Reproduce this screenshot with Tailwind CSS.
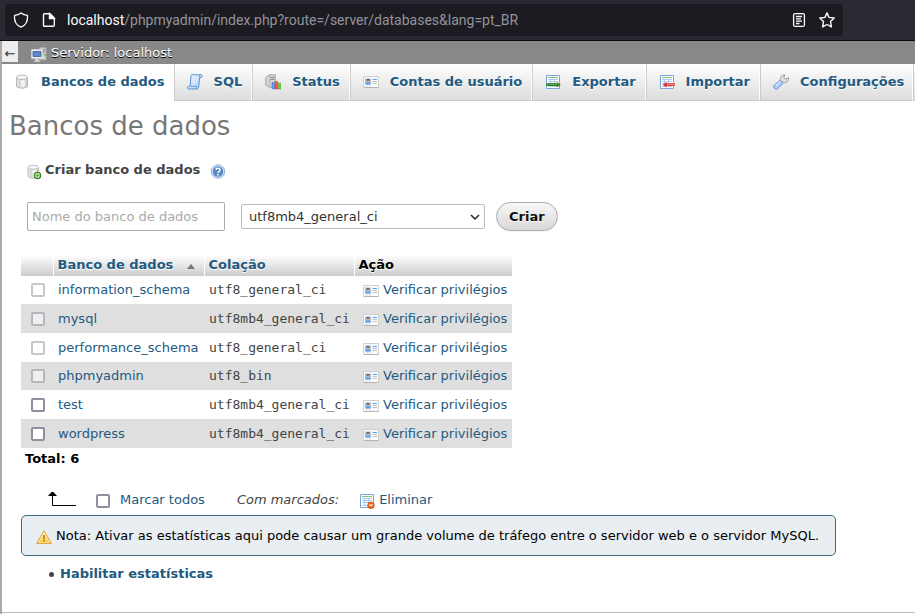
<!DOCTYPE html>
<html lang="pt-BR">
<head>
<meta charset="utf-8">
<meta name="viewport" content="width=device-width, initial-scale=1">
<title>localhost | phpMyAdmin</title>
<script src="https://cdn.jsdelivr.net/npm/@tailwindcss/browser@4"></script>
</head>
<body class="flex min-h-screen flex-col bg-white font-['DejaVu_Sans',sans-serif] text-[13px] leading-4 text-[#444]">

<svg class="absolute size-0" aria-hidden="true">
  <defs>
    <linearGradient id="silver" x1="0" x2="1" y1="0" y2="0"><stop offset="0" stop-color="#f6f6f6"/><stop offset=".25" stop-color="#d2d2d2"/><stop offset=".6" stop-color="#fafafa"/><stop offset="1" stop-color="#c2c2c2"/></linearGradient>
    <linearGradient id="paper" x1="0" x2="1" y1="0" y2="1"><stop offset="0" stop-color="#f4faff"/><stop offset="1" stop-color="#a9cdf3"/></linearGradient>
    <linearGradient id="amber" x1="0" x2="0" y1="0" y2="1"><stop offset="0" stop-color="#fff6c8"/><stop offset="1" stop-color="#f7c53c"/></linearGradient>
    <symbol id="i-db" viewBox="0 0 16 16">
      <path d="M2.500 3.500v8.500c0 1.200 2.400 2.100 5.500 2.100s5.500-.9 5.500-2.100v-8.500z" fill="url(#silver)" stroke="#b4b4b4"/>
      <ellipse cx="8" cy="3.300" rx="5.500" ry="2.200" fill="#f7f7f7" stroke="#bababa"/>
    </symbol>
    <symbol id="i-dbnew" viewBox="0 0 16 16">
      <path d="M1 3.500v8.500c0 1.300 2.300 2.200 5.300 2.200s5.300-.9 5.300-2.200v-8.500z" fill="url(#silver)" stroke="#b9b9b9"/>
      <ellipse cx="6.300" cy="3.300" rx="5.300" ry="2" fill="#f8f8f8" stroke="#bfbfbf"/>
      <circle cx="10.500" cy="11.500" r="3.100" fill="#fff" stroke="#3d8516" stroke-width="1.300"/>
      <path d="M10.500 9.500v4M8.500 11.500h4" stroke="#63ad35" stroke-width="1.300"/>
    </symbol>
    <symbol id="i-server" viewBox="0 0 16 16">
      <path d="M8.500 .8h6.500v12h-6.500z" fill="#d4d4d4" stroke="#aaa"/><path d="M11 3h3M11 5h3" stroke="#777"/><path d="M13 8h1.500" stroke="#5cb33b" stroke-width="1.500"/>
      <path d="M.5 2.500h11v9h-11z" fill="#eee" stroke="#d0d0d0"/><path d="M2 4.500h8v5h-8z" fill="#5c88cb" stroke="#345f9f" stroke-width=".8"/>
      <path d="M4.500 12h3v1.500h1.500v1.300h-6v-1.300h1.500z" fill="#ddd"/>
    </symbol>
    <symbol id="i-sql" viewBox="0 0 16 16">
      <path d="M4.500.8h9.500c1.400.2 1.500 2 .5 2.800h-1.800l-1 9c-.2 1.600-.8 2.400-2 2.400h-8c-1.600-.3-1.500-2.500 0-2.700h1.500l.8-9.500c0-1.200-.2-1.700.5-2z" fill="url(#paper)" stroke="#5b92cf"/>
      <path d="M4 12.300h5.500c.6.800.2 2.200-.8 2.600M12.700 3.600c-.6-.8-.3-2.300.7-2.800" fill="none" stroke="#5b92cf" stroke-width=".9"/>
    </symbol>
    <symbol id="i-status" viewBox="0 0 16 16">
      <path d="M.8 3.200 4.500.8h5.800v12.400H4.500L.8 11z" fill="#d6d6d6" stroke="#a5a5a5"/><path d="M4.700 1v12" stroke="#b5b5b5"/><path d="M5.500 3.500h4M5.500 5.500h4" stroke="#888"/>
      <path d="M7 8.500h2.500v6.500H7z" fill="#5aa0ff" stroke="#2f74df" stroke-width=".5"/><path d="M10 7.500h2.700v7.500H10z" fill="#ff5542" stroke="#e12f20" stroke-width=".5"/><path d="M13.200 9h2.500v6h-2.500z" fill="#66cf42" stroke="#3fa51d" stroke-width=".5"/>
    </symbol>
    <symbol id="i-card" viewBox="0 0 16 16">
      <path d="M.5 2.500h15v11H.5z" fill="#fafafa" stroke="#cfcfcf"/><path d="M1 13.500h14.500" stroke="#b4b4b4"/>
      <path d="M2 4.500h6v6H2z" fill="#8fc1f6"/><path d="M2.700 10.500c0-2 1-2.500 2.300-2.500s2.300.5 2.300 2.500z" fill="#5c9dec"/><circle cx="5" cy="7" r="1.500" fill="#ecae7b"/><path d="M3.400 6.500c.2-2 3-2 3.200 0z" fill="#6c4527"/>
      <path d="M9.500 5.500h4.500" stroke="#62a3ea"/><path d="M9.500 7.500h4.500M9.500 9.500h4.500" stroke="#c2c2c2"/><path d="M3 12h1.500M6 12h1.500" stroke="#ccc"/>
    </symbol>
    <symbol id="i-table" viewBox="0 0 16 16">
      <path d="M1.500 1.500h13v13h-13z" fill="#fff" stroke="#7ba4dc"/><path d="M3 3.500h10" stroke="#83c07b"/>
      <path d="M3 5.500h10M3 7.500h10M3 9.500h10M3 12.500h10M5.500 5v8M9.500 5v8" stroke="#a5c5ee" stroke-width=".9"/>
    </symbol>
    <symbol id="i-export" viewBox="0 0 16 16"><use href="#i-table"/><path d="M1.300 9.300h10.500V7.900l4 2.800-4 2.800v-1.400H1.300z" fill="#2e7f1e"/><path d="M2.200 10.700h11" stroke="#75b95e" stroke-width=".7"/></symbol>
    <symbol id="i-import" viewBox="0 0 16 16"><use href="#i-table"/><path d="M15.700 9.300H7.500V7.900l-4 2.800 4 2.800v-1.400h8.200z" fill="#ed3333"/><path d="M8 10.700h7" stroke="#ffaaa4" stroke-width=".8"/></symbol>
    <symbol id="i-drop" viewBox="0 0 16 16"><use href="#i-table"/><circle cx="12" cy="12.300" r="3.300" fill="#ed6a1d" stroke="#c54a0a" stroke-width=".7"/><path d="M10.200 12.200h3.600" stroke="#fff" stroke-width="1.300"/></symbol>
    <symbol id="i-wrench" viewBox="0 0 16 16">
      <path d="M7.500 6.800c-.8-3 1-5.800 4.300-6l-1 2.700 1.600 1.700 3.200-1.400c.7 3-2 5.200-5.100 4.500z" fill="#e2e2e2" stroke="#8d8d8d" stroke-width=".9"/>
      <path d="M6.800 6.300l3.200 3.200-5.300 5.200c-2.200 1.500-5.200-1.200-3.500-3.500z" fill="#a9c7f7" stroke="#6790dc" stroke-width=".9"/><path d="M2.700 12l4.800-4.500" stroke="#dbe8ff" stroke-width="1.300"/>
    </symbol>
    <symbol id="i-help" viewBox="0 0 16 16">
      <circle cx="8" cy="7.500" r="6.700" fill="#dce8f7" stroke="#83a6d2" stroke-width=".9"/><circle cx="8" cy="7.500" r="5.300" fill="#5a89c6"/>
      <path d="M6 6.100c0-2.600 4-2.500 4-.2 0 1.500-2 1.400-2 3" fill="none" stroke="#fff" stroke-width="1.400"/><circle cx="8" cy="10.700" r=".9" fill="#fff"/>
    </symbol>
    <symbol id="i-warn" viewBox="0 0 16 16">
      <path d="M8 .8 15.300 13.400H.7z" fill="url(#amber)" stroke="#dfa03a" stroke-linejoin="round"/><path d="M8 2.900 13.500 12.400h-11z" fill="none" stroke="#fff2b5" stroke-width=".7"/>
      <path d="M8 5v4.500" stroke="#c48113" stroke-width="1.800"/><path d="M8 10.300v1.500" stroke="#c48113" stroke-width="1.800"/>
    </symbol>
  </defs>
</svg>

<div class="flex h-[41px] items-center border-b border-[#0c0c0d] bg-[#2b2a33] pr-[72px] pl-[5px]">
  <div class="flex h-8 flex-1 items-center rounded bg-[#1c1b22] pl-2 text-[#fbfbfe]">
    <svg class="size-4 shrink-0" viewBox="0 0 16 16" fill="none" stroke="currentColor" stroke-width="1.300" aria-hidden="true"><path d="M8 .9c2 1.500 4 2.200 6.500 2.500.4 5-1.400 9.800-6.500 11.700C2.900 13.200 1.100 8.400 1.500 3.400 4 3.100 6 2.400 8 .9z" stroke-linejoin="round"/></svg>
    <svg class="ml-3 size-4 shrink-0" viewBox="0 0 16 16" fill="none" stroke="currentColor" stroke-width="1.400" aria-hidden="true"><path d="M3.500 1.700h5.500l4.300 4.300v7.300a1 1 0 0 1-1 1H3.500a1 1 0 0 1-1-1V2.700a1 1 0 0 1 1-1z"/><path d="M8.500 1.700v4.800h4.800z" fill="currentColor"/></svg>
    <div role="textbox" aria-label="Endereço" class="ml-[10px] flex-1 font-['Roboto',sans-serif] text-[14px] leading-5 whitespace-nowrap text-[#93939b]"><span class="text-[#fbfbfe]">localhost</span>/phpmyadmin/index.php?route=/server/databases&amp;lang=pt_BR</div>
    <button type="button" aria-label="Modo de leitura" class="mr-3"><svg class="size-4" viewBox="0 0 16 16" fill="none" stroke="currentColor" stroke-width="1.300"><rect x="2.600" y="1.600" width="10.800" height="12.800" rx="1.500"/><path d="M5 4.500h6M5 6.800h5M5 9.200h6M5 11.500h3.500"/></svg></button>
    <button type="button" aria-label="Adicionar aos favoritos" class="mr-2"><svg class="size-4" viewBox="0 0 16 16" fill="none" stroke="currentColor" stroke-width="1.400" stroke-linejoin="round"><path d="M8 .9l2 4.500 5.200.6-3.700 3.600.9 5.300L8 12.500l-4.400 2.400.9-5.300L.8 6 6 5.400z"/></svg></button>
  </div>
</div>

<div class="flex flex-1 flex-col border-l-2 border-[#aaa]">
  <header class="flex h-[23px] items-start bg-[#888]">
    <button type="button" aria-label="Ocultar painel" class="h-[21px] w-4 bg-[#eee] pt-1 text-[13px] text-[#333]">←</button>
    <a href="#" class="ml-3 flex h-[23px] items-center gap-1 text-white [text-shadow:0_1px_0_#000]"><svg class="mt-1 ml-px size-4" aria-hidden="true"><use href="#i-server"/></svg>Servidor: localhost</a>
  </header>

  <nav class="flex font-bold text-[#235a81] [text-shadow:0_1px_0_#fff]">
    <a href="#" class="flex h-9 items-center gap-[11px] border-r border-white bg-white pr-2 pl-3 whitespace-nowrap"><svg class="size-4" aria-hidden="true"><use href="#i-db"/></svg>Bancos de dados</a>
    <a href="#" class="flex h-[37px] items-center gap-[11px] border border-t-0 border-[#ccc] border-r-white bg-linear-to-b from-white to-[#dcdcdc] pr-[9px] pl-3 whitespace-nowrap"><svg class="size-4" aria-hidden="true"><use href="#i-sql"/></svg>SQL</a>
    <a href="#" class="flex h-[37px] items-center gap-[11px] border border-t-0 border-[#ccc] border-r-white bg-linear-to-b from-white to-[#dcdcdc] pr-[9px] pl-3 whitespace-nowrap"><svg class="size-4" aria-hidden="true"><use href="#i-status"/></svg>Status</a>
    <a href="#" class="flex h-[37px] items-center gap-[11px] border border-t-0 border-[#ccc] border-r-white bg-linear-to-b from-white to-[#dcdcdc] pr-[9px] pl-3 whitespace-nowrap"><svg class="size-4" aria-hidden="true"><use href="#i-card"/></svg>Contas de usuário</a>
    <a href="#" class="flex h-[37px] items-center gap-[11px] border border-t-0 border-[#ccc] border-r-white bg-linear-to-b from-white to-[#dcdcdc] pr-[9px] pl-3 whitespace-nowrap"><svg class="size-4" aria-hidden="true"><use href="#i-export"/></svg>Exportar</a>
    <a href="#" class="flex h-[37px] items-center gap-[11px] border border-t-0 border-[#ccc] border-r-white bg-linear-to-b from-white to-[#dcdcdc] pr-[9px] pl-3 whitespace-nowrap"><svg class="size-4" aria-hidden="true"><use href="#i-import"/></svg>Importar</a>
    <a href="#" class="flex h-[37px] items-center gap-[11px] border border-t-0 border-[#ccc] border-r-white bg-linear-to-b from-white to-[#dcdcdc] pr-2 pl-3 whitespace-nowrap"><svg class="size-4" aria-hidden="true"><use href="#i-wrench"/></svg>Configurações</a>
    <span class="flex-1 border-b border-l border-[#ccc] bg-linear-to-b from-white to-[#dcdcdc]"></span>
  </nav>

  <main class="flex-1 px-[19px]">
    <h1 class="-ml-3 pt-[9px] text-[26px] leading-8 text-[#777]">Bancos de dados</h1>

    <form class="pt-[18px] pl-[6px]" onsubmit="return false">
      <div class="flex h-5 items-center font-bold">
        <svg class="mt-1 size-4" aria-hidden="true"><use href="#i-dbnew"/></svg><label for="db" class="ml-[2px]">Criar banco de dados</label>
        <a href="#" aria-label="Documentação" class="mt-1 ml-[10px]"><svg class="size-4"><use href="#i-help"/></svg></a>
      </div>
      <div class="flex items-center pt-[22px]">
        <input id="db" type="text" placeholder="Nome do banco de dados" class="h-[29px] w-[198px] rounded-xs border border-[#aaa] bg-white px-1 text-[#444] placeholder:text-[#aaa]">
        <div class="relative ml-4">
          <select aria-label="Colação" class="h-[25px] w-[244px] appearance-none rounded-xs border border-[#bbb] bg-white pr-6 pl-[7px] text-[#333]"><option>utf8mb4_general_ci</option><option>utf8_general_ci</option></select>
          <svg class="pointer-events-none absolute top-2 right-[5px] size-[10px]" viewBox="0 0 10 10" fill="none" stroke="#222" stroke-width="1.500" aria-hidden="true"><path d="M1 3l4 4 4-4"/></svg>
        </div>
        <button type="submit" class="ml-[11px] h-[29px] rounded-full border border-[#aaa] bg-linear-to-b from-[#f8f8f8] to-[#d8d8d8] px-3 font-bold text-[#111] shadow-xs [text-shadow:0_1px_0_#fff]">Criar</button>
      </div>
    </form>

    <form class="pt-6" onsubmit="return false">
      <table class="w-[491px] table-fixed border-collapse">
        <colgroup><col class="w-8"><col class="w-[151px]"><col class="w-[150px]"><col></colgroup>
        <thead>
          <tr class="h-[21px] text-left text-[#235a81] [text-shadow:0_1px_0_#fff] [&>th]:bg-linear-to-b [&>th]:from-white [&>th]:to-[#ccc] [&>th]:p-0 [&>th]:pb-[2px]">
            <th></th>
            <th class="border-l border-white"><a href="#" class="flex items-center pl-1">Banco de dados <svg class="mt-1 ml-[14px] h-[5px] w-2" viewBox="0 0 8 5" aria-hidden="true"><path d="M4 0l4 5H0z" fill="#777"/></svg></a></th>
            <th class="border-l border-white"><a href="#" class="pl-1">Colação</a></th>
            <th class="border-l border-white text-black"><span class="pl-1">Ação</span></th>
          </tr>
        </thead>
        <tbody id="rows"></tbody>
      </table>
      <div class="pt-[3px] pl-1 font-bold text-black">Total: 6</div>

      <div class="mt-5 flex h-[26px] items-center pl-[27px]">
        <svg class="h-4 w-7" viewBox="0 0 28 16" aria-hidden="true"><path d="M4.500 2v11.500H28" fill="none" stroke="#000"/><path d="M4.500 -1L9 4H0z" fill="#000"/></svg>
        <input id="all" type="checkbox" class="mt-[2px] ml-5 size-[14px] appearance-none rounded-xs border-2 border-[#8f8f9d] bg-white">
        <label for="all" class="ml-[10px] text-[#235a81]">Marcar todos</label>
        <i class="ml-8">Com marcados:</i>
        <button type="button" class="ml-5 flex items-center gap-1 text-[#235a81]"><svg class="mt-[2px] size-4" aria-hidden="true"><use href="#i-drop"/></svg>Eliminar</button>
      </div>
    </form>

    <div class="mt-[2px] flex h-[41px] w-fit items-center gap-1 rounded-[5px] border border-[#3a6c7e] bg-[#e8eef1] pr-4 pl-[14px] whitespace-nowrap text-black"><svg class="mt-1 size-4" aria-hidden="true"><use href="#i-warn"/></svg>Nota: Ativar as estatísticas aqui pode causar um grande volume de tráfego entre o servidor web e o servidor MySQL.</div>

    <ul class="pt-[10px] pl-7">
      <li class="flex items-center gap-[6px] before:size-[5px] before:rounded-full before:bg-[#444]"><a href="#" class="font-bold text-[#235a81]">Habilitar estatísticas</a></li>
    </ul>
  </main>
  <footer class="h-[2px] border-t border-[#bbb]"></footer>
</div>

<script>
const databases = [
  ['information_schema', 'utf8_general_ci', true],
  ['mysql', 'utf8mb4_general_ci', true],
  ['performance_schema', 'utf8_general_ci', true],
  ['phpmyadmin', 'utf8_bin', true],
  ['test', 'utf8mb4_general_ci', false],
  ['wordpress', 'utf8mb4_general_ci', false]
];
document.getElementById('rows').innerHTML = databases.map(([name, collation, system]) => `
  <tr class="h-[29px] even:bg-[#dfdfdf] nth-[3n+1]:h-[28px] [&>td]:p-0">
    <td><input type="checkbox" aria-label="${name}" ${system ? 'disabled' : ''} class="ml-[10px] block size-[14px] appearance-none rounded-xs border-2 border-[#8f8f9d] bg-white disabled:opacity-50"></td>
    <td><a href="#" class="pl-[5px] text-[#235a81]">${name}</a></td>
    <td class="font-['DejaVu_Sans_Mono',monospace] whitespace-nowrap"><span class="pl-[5px]">${collation}</span></td>
    <td><a href="#" class="flex items-center gap-1 pl-[9px] whitespace-nowrap text-[#235a81]"><svg class="mt-[2px] size-4" aria-hidden="true"><use href="#i-card"/></svg>Verificar privilégios</a></td>
  </tr>`).join('');
</script>
</body>
</html>
